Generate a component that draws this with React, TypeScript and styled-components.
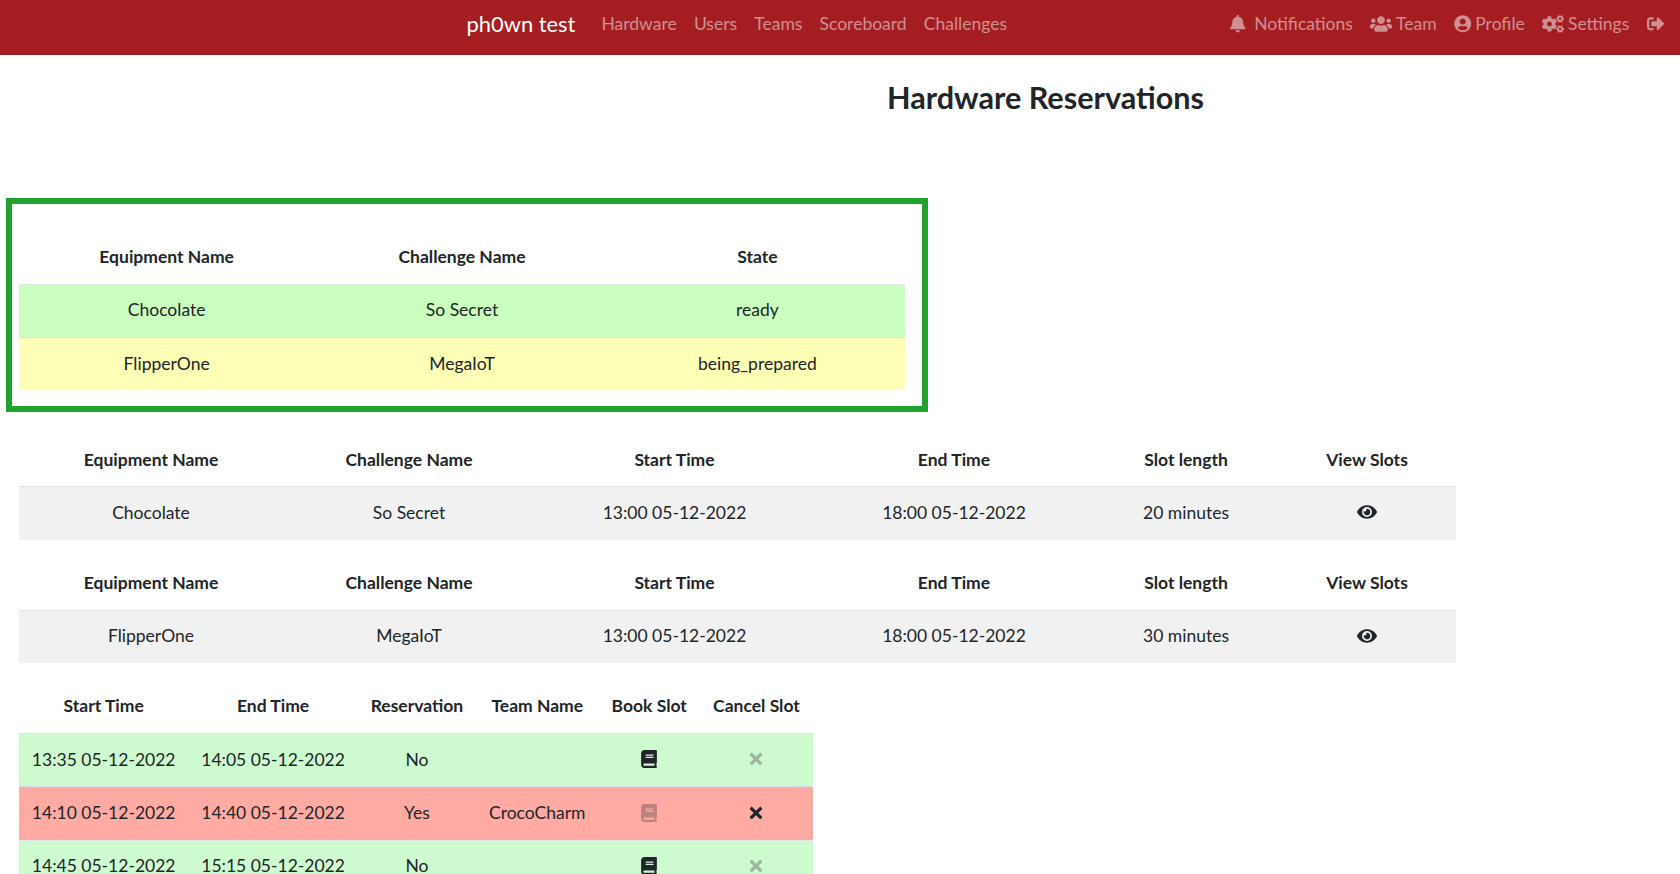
import React from "react";
import styled, { createGlobalStyle } from "styled-components";
import {
  FaBell,
  FaBook,
  FaCogs,
  FaEye,
  FaSignOutAlt,
  FaTimes,
  FaUserCircle,
  FaUsers,
} from "react-icons/fa";

const GlobalStyle = createGlobalStyle`
  html { font-size: 17.5px; }
  *, *::before, *::after { box-sizing: border-box; }
  body {
    margin: 0;
    height: 874px;
    overflow: hidden;
    background: #fff;
    color: #212529;
    font-family: Lato, sans-serif;
    font-size: 1rem;
    line-height: 1.5;
  }
`;

const Navbar = styled.nav`
  display: flex;
  align-items: flex-start;
  height: 55px;
  padding: 10px 16px 0 466.5px;
  background: #a41d21;
`;

const Brand = styled.a`
  width: 135px;
  color: #fff;
  font-size: 21.9px;
  line-height: 28px;
  white-space: nowrap;
`;

const NavGroup = styled.div<{ $end?: boolean }>`
  display: flex;
  gap: 17.2px;
  margin-left: ${(p) => (p.$end ? "auto" : "0")};
`;

const NavLink = styled.a<{ $gap?: number }>`
  display: flex;
  align-items: center;
  gap: ${(p) => p.$gap ?? 4}px;
  height: 28px;
  color: rgba(255, 255, 255, 0.5);
  white-space: nowrap;
`;

const Title = styled.h1`
  margin: 0;
  padding: 21px 0 0 411px;
  height: 143px;
  font-size: 30.6px;
  font-weight: 700;
  line-height: 43px;
  text-align: center;
`;

const Highlight = styled.section`
  width: 922px;
  height: 214px;
  margin-left: 6px;
  padding: 27.5px 0 0 7px;
  border: 6px solid #1fa32f;
`;

const Listings = styled.section`
  display: flex;
  flex-direction: column;
  align-items: flex-start;
  gap: 17.8px;
  padding: 22px 0 0 19px;
`;

const Table = styled.table<{ $width: number }>`
  width: ${(p) => p.$width}px;
  table-layout: fixed;
  border-collapse: separate;
  border-spacing: 0;
  text-align: center;
`;

const HeadCell = styled.th<{ $width: number }>`
  width: ${(p) => p.$width}px;
  height: 52.3px;
  padding: 0 0 1px;
  font-weight: 700;
  white-space: nowrap;
`;

const Row = styled.tr<{ $tone: string }>`
  background: ${(p) => p.$tone};
`;

const Cell = styled.td`
  height: 53.33px;
  padding: 0 0 1.2px;
  border-top: 1px solid #dee2e6;
  white-space: nowrap;
`;

const Action = styled.span<{ $disabled?: boolean }>`
  display: flex;
  justify-content: center;
  margin-bottom: 1px;
  opacity: ${(p) => (p.$disabled ? 0.3 : 1)};
`;

type Column = [label: string, width: number];
type Line = { tone: string; cells: React.ReactNode[] };

function DataTable({ columns, lines }: { columns: Column[]; lines: Line[] }) {
  return (
    <Table $width={columns.reduce((sum, c) => sum + c[1], 0)}>
      <thead>
        <tr>
          {columns.map(([label, width]) => (
            <HeadCell key={label} $width={width}>
              {label}
            </HeadCell>
          ))}
        </tr>
      </thead>
      <tbody>
        {lines.map((line, i) => (
          <Row key={i} $tone={line.tone}>
            {line.cells.map((cell, j) => (
              <Cell key={j}>{cell}</Cell>
            ))}
          </Row>
        ))}
      </tbody>
    </Table>
  );
}

const stateColumns: Column[] = [
  ["Equipment Name", 295.3],
  ["Challenge Name", 295.4],
  ["State", 295.3],
];

const equipmentColumns: Column[] = [
  ["Equipment Name", 264],
  ["Challenge Name", 252],
  ["Start Time", 279],
  ["End Time", 280],
  ["Slot length", 184],
  ["View Slots", 178],
];

const slotColumns: Column[] = [
  ["Start Time", 169.4],
  ["End Time", 169.4],
  ["Reservation", 118.3],
  ["Team Name", 122.4],
  ["Book Slot", 101.5],
  ["Cancel Slot", 113],
];

const equipment = [
  ["Chocolate", "So Secret", "20 minutes"],
  ["FlipperOne", "MegaIoT", "30 minutes"],
];

const slots = [
  { start: "13:35", end: "14:05", team: "" },
  { start: "14:10", end: "14:40", team: "CrocoCharm" },
  { start: "14:45", end: "15:15", team: "" },
];

const DAY = "05-12-2022";

export default function App() {
  return (
    <>
      <GlobalStyle />
      <Navbar>
        <Brand>ph0wn test</Brand>
        <NavGroup>
          {["Hardware", "Users", "Teams", "Scoreboard", "Challenges"].map((label) => (
            <NavLink key={label}>{label}</NavLink>
          ))}
        </NavGroup>
        <NavGroup $end>
          <NavLink $gap={8}>
            <FaBell />
            Notifications
          </NavLink>
          <NavLink>
            <FaUsers size={22} />
            Team
          </NavLink>
          <NavLink>
            <FaUserCircle />
            Profile
          </NavLink>
          <NavLink>
            <FaCogs size={22} />
            Settings
          </NavLink>
          <NavLink>
            <FaSignOutAlt />
          </NavLink>
        </NavGroup>
      </Navbar>
      <Title>Hardware Reservations</Title>
      <Highlight>
        <DataTable
          columns={stateColumns}
          lines={[
            { tone: "#caffbf", cells: ["Chocolate", "So Secret", "ready"] },
            { tone: "#fdffb6", cells: ["FlipperOne", "MegaIoT", "being_prepared"] },
          ]}
        />
      </Highlight>
      <Listings>
        {equipment.map(([name, challenge, length]) => (
          <DataTable
            key={name}
            columns={equipmentColumns}
            lines={[
              {
                tone: "#f1f1f1",
                cells: [
                  name,
                  challenge,
                  `13:00 ${DAY}`,
                  `18:00 ${DAY}`,
                  length,
                  <Action>
                    <FaEye size={20} />
                  </Action>,
                ],
              },
            ]}
          />
        ))}
        <DataTable
          columns={slotColumns}
          lines={slots.map(({ start, end, team }) => ({
            tone: team ? "#ffaba4" : "#cefacf",
            cells: [
              `${start} ${DAY}`,
              `${end} ${DAY}`,
              team ? "Yes" : "No",
              team,
              <Action $disabled={!!team}>
                <FaBook size={18} />
              </Action>,
              <Action $disabled={!team}>
                <FaTimes size={18} />
              </Action>,
            ],
          }))}
        />
      </Listings>
    </>
  );
}
